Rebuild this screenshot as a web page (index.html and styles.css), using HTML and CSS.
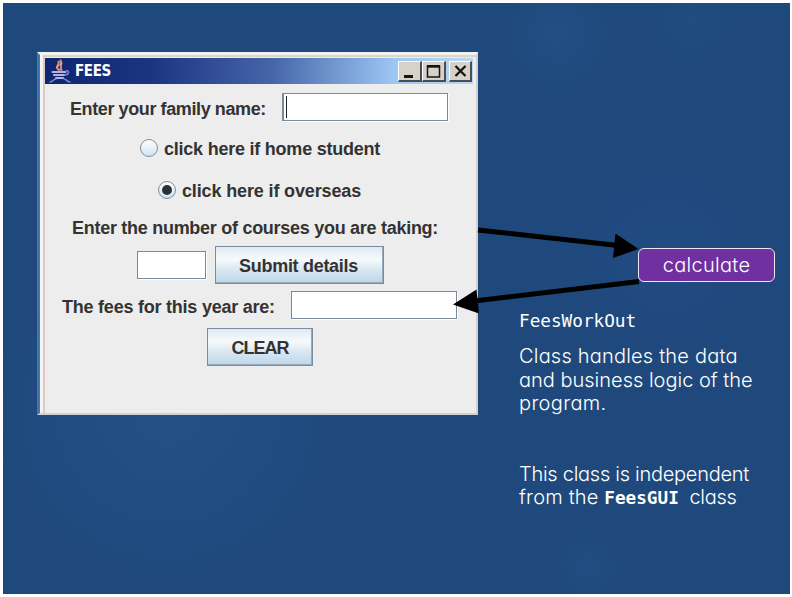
FILE: index.html
```html
<!DOCTYPE html>
<html lang="en">
<head>
<meta charset="utf-8">
<title>FEES</title>
<link rel="stylesheet" href="styles.css">
</head>
<body>
<main class="slide">
  <section class="window">
    <header class="titlebar">
      <svg class="java" viewBox="0 0 22 24" width="22" height="24">
        <g fill="none" stroke-linecap="round">
          <path d="M10 11C5 8 11 6 9.500 3M12.500 11C10 8 14 7 11.500 1.500" stroke="#d98a76" stroke-width="2.200"/>
          <path d="M8 8c1-2 4-2 5-4" stroke="#f0c0a8" stroke-width="1"/>
          <path d="M3.500 13h13M5 16h10M7 19h7" stroke="#b4b3e6" stroke-width="2.200"/>
          <path d="M17 12c4-1 3 4-1 4M1 23c3 0 3-3 6-3M15 20c3 0 2 3 6 3" stroke="#8088cc" stroke-width="1.500"/>
        </g>
      </svg>
      <h1 class="title">FEES</h1>
      <div class="controls">
        <span class="control"><svg viewBox="0 0 22 19" width="22" height="19"><path d="M5 13h9v3H5z"/></svg></span>
        <span class="control"><svg viewBox="0 0 22 19" width="22" height="19"><path d="M4.500 4h12v11h-12z" fill="none" stroke="#171310" stroke-width="1.500"/><path d="M4 3h13v2.700H4z"/></svg></span>
        <span class="control close"><svg viewBox="0 0 22 19" width="22" height="19"><path d="M5.500 4l10 10M15.500 4l-10 10" stroke="#171310" stroke-width="2.300"/></svg></span>
      </div>
    </header>
    <div class="form">
      <div class="row row-name"><span class="label t-name">Enter your family name:</span><span class="field focused"></span></div>
      <div class="row row-home"><span class="radio"></span><span class="label t-home">click here if home student</span></div>
      <div class="row row-over"><span class="radio on"></span><span class="label t-over">click here if overseas</span></div>
      <div class="row row-courses"><span class="label t-courses">Enter the number of courses you are taking:</span></div>
      <div class="row row-submit"><span class="field small"></span><span class="button submit"><span class="label t-submit">Submit details</span></span></div>
      <div class="row row-fees"><span class="label t-fees">The fees for this year are:</span><span class="field"></span></div>
      <div class="row row-clear"><span class="button clear"><span class="label t-clear">CLEAR</span></span></div>
    </div>
  </section>
  <aside class="notes">
    <div class="calculate"><span class="t-calc">calculate</span></div>
    <p class="mono head">FeesWorkOut</p>
    <p class="text"><span class="l1">Class handles the data</span><br><span class="l2">and business logic of the</span><br><span class="l3">program.</span></p>
    <p class="text last"><span class="l4">This class is independent</span><br><span class="l5">from the</span> <b class="mono">FeesGUI</b> <span class="l6">class</span></p>
  </aside>
  <svg class="arrows" viewBox="0 0 792 597" width="792" height="597">
    <path d="M478 230L618 245.500M639 281.500L474 301" stroke="#000" stroke-width="5"/>
    <path d="M615.500 233.500L638.500 249L613 258zM453 304.500L476.500 289.500L479 313.500z"/>
  </svg>
</main>
</body>
</html>
```
FILE: styles.css
```css
* { box-sizing: border-box; margin: 0; padding: 0; }
html, body { width: 792px; height: 597px; overflow: hidden; background: #fff; }
.slide {
  position: relative;
  width: 787px;
  height: 591px;
  margin: 3px 0 0 3px;
  display: flex;
  background:
    radial-gradient(circle at 665px 253px, #214c82 0, #204a7f 60px, #1f497c00 100px),
    radial-gradient(circle at 165px 410px, #245086 0, #214c82 100px, #1f497c00 175px),
    radial-gradient(circle at 555px 30px, #234e84 0, #1f497c00 62px),
    radial-gradient(circle at 690px 15px, #214c80 0, #1f497c00 50px),
    radial-gradient(circle at 585px 562px, #224d82 0, #1f497c00 36px),
    #1f497c;
}
.window {
  width: 441px;
  height: 363px;
  margin: 49px 0 0 34px;
  padding: 3px 3px 0 5px;
  background: #ededed;
  border-left: 3px solid #3e76ad;
  border-right: 2px solid #d3d1d0;
  border-top: 3px solid #f3f2ec;
  border-bottom: 2px solid #d5d1cc;
  box-shadow: inset 3px 0 #f4f3f1, inset 5px 0 #d9c9c1, inset 0 2px #d8d6c6;
}
.titlebar {
  height: 26px;
  display: flex;
  align-items: center;
  padding: 0 1px 0 4px;
  background: linear-gradient(90deg, #0d2670 0, #1b3583 25%, #4565a8 53%, #9dc8f5 82%, #bcd6f0 100%);
}
.title { font: bold 15px/26px "DejaVu Sans Condensed", sans-serif; color: #fff; margin-left: 4px; letter-spacing: -0.4px; }
.controls { display: flex; margin-left: auto; }
.control {
  width: 24px; height: 21px;
  background: #d6d1c9;
  border: 1px solid #fff;
  border-right: 2px solid #4c4d50;
  border-bottom: 2px solid #4c4d50;
}
.control.close { width: 23px; margin-left: 3px; }
.control svg { display: block; fill: #171310; }
.form { color: #333; }
.row { display: flex; align-items: center; }
.label { font: bold 18px/24px "Liberation Sans", Arial, sans-serif; color: #333; white-space: nowrap; }
.t-name { letter-spacing: -0.4px; padding-top: 3px; }
.t-home { letter-spacing: -0.23px; padding-top: 1px; }
.t-over { letter-spacing: -0.14px; padding-top: 2px; }
.t-courses { letter-spacing: -0.28px; }
.t-submit { letter-spacing: -0.3px; padding-top: 2px; margin-right: 2px; }
.t-fees { letter-spacing: -0.23px; padding-top: 4px; }
.t-clear { letter-spacing: -1px; padding-top: 2px; }
.field { width: 166px; height: 28px; background: #fff; border: 1px solid #7a8a99; box-shadow: 1px 1px #fff; }
.field.focused { border-left-width: 2px; padding: 2px; }
.field.focused::before { content: ""; display: block; width: 1px; height: 22px; background: #222; }
.field.small { width: 69px; }
.radio {
  width: 18px; height: 18px; border-radius: 50%;
  border: 1px solid #7d8d9c;
  background: linear-gradient(#fff, #cfe3f1);
  display: flex; align-items: center; justify-content: center;
}
.radio.on::before { content: ""; width: 10px; height: 10px; border-radius: 50%; background: #2b3136; }
.button {
  display: flex; align-items: center; justify-content: center;
  height: 38px;
  border: 1px solid #7a8c9e;
  background: linear-gradient(#dfeaf4 0, #f6fafc 35%, #dbe9f2 60%, #bdd6e8 100%);
  box-shadow: inset -1px -1px #98abbd;
}
.submit { width: 169px; margin-left: 9px; }
.clear { width: 106px; }
.row-name { height: 28px; margin: 9px 0 0 25px; }
.row-name .field { margin-left: auto; margin-right: 25px; }
.row-home { height: 24px; margin: 15px 0 0 95px; }
.row-over { height: 24px; margin: 18px 0 0 113px; }
.row-home .label, .row-over .label { margin-left: 6px; }
.row-courses { height: 24px; margin: 14px 0 0 27px; }
.row-submit { height: 38px; margin: 6px 0 0 92px; }
.row-fees { height: 28px; margin: 7px 0 0 17px; }
.row-fees .field { margin-left: auto; margin-right: 16px; }
.row-clear { height: 38px; margin: 9px 0 0 162px; }
.notes { width: 257px; margin: 245px 0 0 41px; color: #fff; }
.calculate {
  width: 137px; height: 34px; margin-left: 119px;
  border: 1px solid #eee6f5; border-radius: 6px;
  background: #7030a0;
  display: flex; align-items: center; justify-content: center;
}
.calculate, .text { font-family: Inter, sans-serif; font-weight: 300; font-size: 20px; font-feature-settings: "cv11"; white-space: nowrap; }
.t-calc { letter-spacing: 0.3px; }
.l1 { letter-spacing: 0.2px; }
.l3 { letter-spacing: 0.35px; }
.l4 { letter-spacing: -0.27px; }
.l5 { letter-spacing: 0.2px; }
.l6 { letter-spacing: -0.3px; margin-left: 5px; }
.text { line-height: 23.500px; margin-top: 12px; }
.mono { font-family: "DejaVu Sans Mono", monospace; font-size: 17.700px; }
b.mono { font-weight: 700; line-height: 1; }
.head { line-height: 24px; margin-top: 27px; }
.text.last { margin-top: 47px; }
.arrows { position: absolute; left: -3px; top: -3px; pointer-events: none; }
```
